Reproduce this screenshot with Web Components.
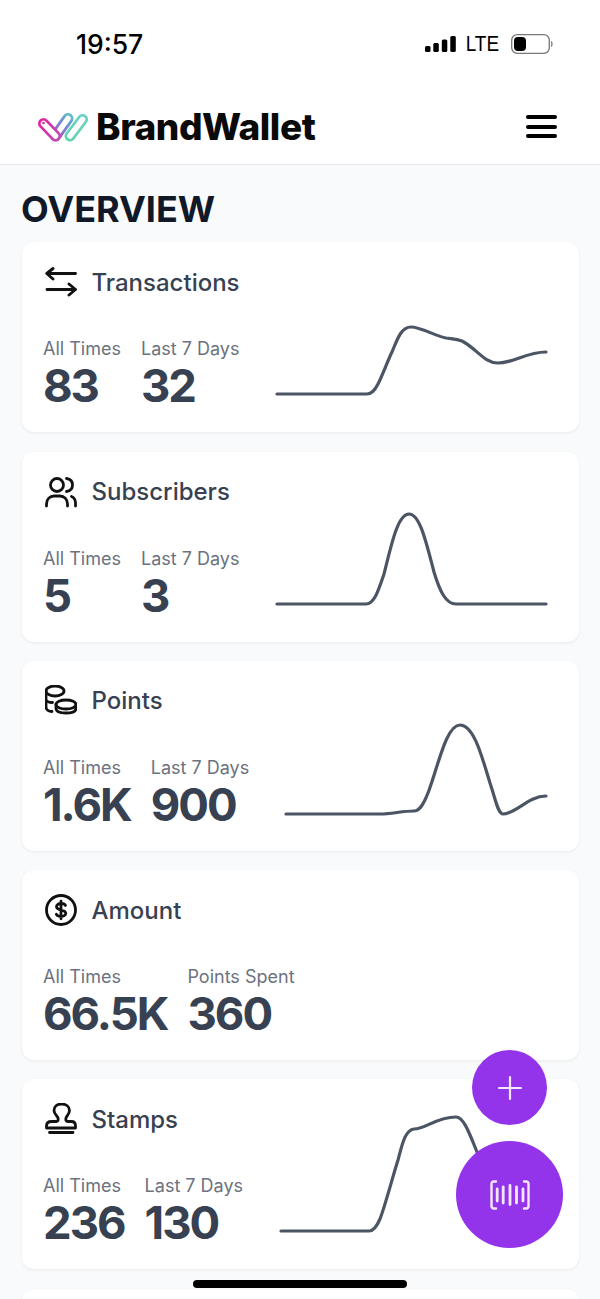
<!DOCTYPE html>
<html>
<head>
<meta charset="utf-8">
<title>BrandWallet</title>
<style>
    html, body { margin: 0; padding: 0; background: #f9fafb; }
    body { font-family: Inter, "Liberation Sans", sans-serif; }
</style>
</head>
<body>
<bw-app>
    <bw-status-bar slot="top" time="19:57" network="LTE"></bw-status-bar>
    <bw-header slot="top" brand="BrandWallet"></bw-header>

    <bw-overview heading="OVERVIEW">
        <bw-card heading="Transactions">
            <svg slot="icon" width="32" height="32" viewBox="0 0 32 32" fill="none" stroke="#111" stroke-width="2.9" stroke-linecap="round" stroke-linejoin="round"><path d="M30.500 7.500H2M8 2.500L1.800 7.500L8 13M2 23.500H30.500M24 18L30.500 23.500L24 29"/></svg>
            <bw-stat label="All Times" value="83"></bw-stat>
            <bw-stat label="Last 7 Days" value="32"></bw-stat>
            <bw-sparkline slot="chart" from="277" d="M277 152H367C372 152 375 148 378 142C383 132 388 118 392 110C397 98 401 85 411 85C420 85 436 94 446 96C452 97 456 97 462 99C476 106 484 121 498 121C514 121 526 110 546 110"></bw-sparkline>
        </bw-card>
        <bw-card heading="Subscribers">
            <svg slot="icon" width="32" height="32" viewBox="0 0 32 32" fill="none" stroke="#111" stroke-width="2.8" stroke-linecap="round" stroke-linejoin="round"><circle cx="12" cy="9" r="6.500"/><path d="M1.500 30V28C1.500 23 5 20 9 20H15C19 20 22.500 23 22.500 28V30M21.500 2.500C25 3 27.500 5.500 27.500 9C27.500 12.500 25 15 21.500 15.500M26.500 20.500C29 21.500 30.500 24 30.500 27V30"/></svg>
            <bw-stat label="All Times" value="5"></bw-stat>
            <bw-stat label="Last 7 Days" value="3"></bw-stat>
            <bw-sparkline slot="chart" from="277" d="M277 152H366C374 152 378 140 384 122C392 90 398 62 409 62C420 62 426 90 434 120C440 140 446 152 456 152H546"></bw-sparkline>
        </bw-card>
        <bw-card heading="Points">
            <svg slot="icon" width="32" height="32" viewBox="0 0 32 32" fill="none" stroke="#111" stroke-width="2.8" stroke-linecap="round" stroke-linejoin="round"><ellipse cx="10" cy="6" rx="9" ry="5"/><path d="M1 6V22C1 25 4 26.500 7 26.500M1.200 15C2 17 5 17.500 7.500 17.500"/><ellipse cx="21" cy="19.500" rx="10" ry="4.500"/><path d="M11 19.500V23.500C11 26.500 15.500 28 21 28C26.500 28 31 26.500 31 23.500V19.500"/></svg>
            <bw-stat label="All Times" value="1.6K"></bw-stat>
            <bw-stat label="Last 7 Days" value="900"></bw-stat>
            <bw-sparkline slot="chart" from="286" d="M286 153H380C392 153 402 150 414 150C420 150 424 142 428 132C438 106 446 64 460 64C474 64 482 96 490 122C496 140 498 153 503 153C516 153 528 135 546 135"></bw-sparkline>
        </bw-card>
        <bw-card heading="Amount">
            <svg slot="icon" width="32" height="32" viewBox="0 0 32 32" fill="none" stroke="#111" stroke-width="2.800" stroke-linecap="round" stroke-linejoin="round"><circle cx="16" cy="16" r="14.500"/><path d="M20.500 11.500C20 10 18 9.500 16 9.500C13.500 9.500 11.500 10.800 11.500 12.800C11.500 17 20.800 15 20.800 19.300C20.800 21.300 18.500 22.500 16 22.500C14 22.500 12 22 11.300 20.300M16 7.200V24.800"/></svg>
            <bw-stat label="All Times" value="66.5K"></bw-stat>
            <bw-stat label="Points Spent" value="360"></bw-stat>
        </bw-card>
        <bw-card heading="Stamps">
            <svg slot="icon" width="32" height="32" viewBox="0 0 32 32" fill="none" stroke="#111" stroke-width="2.800" stroke-linecap="round" stroke-linejoin="round"><path d="M1.500 25V23C1.500 20 3.500 18.500 6.500 18.500H11C13 18.500 13.500 17 13 15C12.400 13 9 11 9 7.500C9 3.500 12 1 16.500 1C21 1 24.500 3.500 24.500 7.500C24.500 11 21.500 13 21 15C20.500 17 21 18.500 23 18.500H26.500C29 18.500 30.500 20 30.500 23V25ZM4.500 29.500H28"/></svg>
            <bw-stat label="All Times" value="236"></bw-stat>
            <bw-stat label="Last 7 Days" value="130"></bw-stat>
            <bw-sparkline slot="chart" from="281" d="M281 152H369C374 152 377 147 380 140C386 124 392 100 398 81C402 66 405 51 414 50C426 50 436 38 456 38C464 38 470 56 477 73C484 90 500 120 546 130"></bw-sparkline>
        </bw-card>
        <bw-card></bw-card>
    </bw-overview>

    <bw-fab slot="overlay" size="75" right="53" bottom="174">
        <svg width="26" height="26" viewBox="0 0 26 26" fill="none" stroke="#f3e8ff" stroke-width="2.200" stroke-linecap="round"><path d="M13 2V24M2 13H24"/></svg>
    </bw-fab>
    <bw-fab slot="overlay" size="107" right="37" bottom="51">
        <svg width="40" height="30" viewBox="0 0 40 30" fill="none" stroke="#f3e8ff" stroke-width="2.400" stroke-linecap="round" stroke-linejoin="round"><path d="M6 1.500H4C2.500 1.500 1.500 2.500 1.500 4V26C1.500 27.500 2.500 28.500 4 28.500H6M34 1.500H36C37.500 1.500 38.500 2.500 38.500 4V26C38.500 27.500 37.500 28.500 36 28.500H34"/><path stroke-width="2.800" d="M7.200 9V21M13.200 7V23M20 5.500V24.500M26.500 7V23M33 9V21"/></svg>
    </bw-fab>
    <bw-home-indicator slot="overlay"></bw-home-indicator>
</bw-app>

<script>
class BwApp extends HTMLElement {
    constructor() {
        super();
        this.attachShadow({ mode: 'open' });
    }

    connectedCallback() {
        this.shadowRoot.innerHTML = `
            <style>
                :host {
                    display: flex;
                    flex-direction: column;
                    position: relative;
                    width: 600px;
                    height: 1299px;
                    overflow: hidden;
                    background: #f9fafb;
                }
            </style>
            <slot name="top"></slot>
            <slot></slot>
            <slot name="overlay"></slot>
        `;
    }
}

class BwStatusBar extends HTMLElement {
    constructor() {
        super();
        this.attachShadow({ mode: 'open' });
    }

    connectedCallback() {
        const time = this.getAttribute('time') || '';
        const network = this.getAttribute('network') || '';

        this.shadowRoot.innerHTML = `
            <style>
                :host {
                    display: flex;
                    flex: none;
                    align-items: center;
                    justify-content: space-between;
                    box-sizing: border-box;
                    height: 94px;
                    padding: 0 47px 7px 76px;
                    background: #fff;
                    color: #000;
                    font-family: Inter, "Liberation Sans", sans-serif;
                }
                .time { font-size: 26.500px; font-weight: 500; }
                .right { display: flex; align-items: center; gap: 11px; }
                .net {
                    font-family: "Liberation Sans", sans-serif;
                    font-size: 22px;
                    transform: scaleX(.86);
                    margin: 0 -2px 0 -4px;
                }
            </style>
            <span class="time">${time}</span>
            <span class="right">
                <svg width="31" height="16" viewBox="0 0 31 16" fill="#000"><rect x="0" y="10" width="5.500" height="6" rx="1.500"/><rect x="8.300" y="7" width="5.500" height="9" rx="1.500"/><rect x="16.800" y="3.500" width="5.500" height="12.500" rx="1.500"/><rect x="25.300" y="0" width="5.500" height="16" rx="1.500"/></svg>
                <span class="net">${network}</span>
                <svg width="42" height="20" viewBox="0 0 42 20" fill="none"><rect x=".7" y=".7" width="37.600" height="18.600" rx="5.500" stroke="#777" stroke-width="1.300"/><rect x="3" y="3" width="12" height="14" rx="4" fill="#000"/><path d="M40 7.500C41.300 8 41.300 12 40 12.500" stroke="#777" stroke-width="1.300"/></svg>
            </span>
        `;
    }
}

class BwHeader extends HTMLElement {
    constructor() {
        super();
        this.attachShadow({ mode: 'open' });
    }

    connectedCallback() {
        const brand = this.getAttribute('brand') || '';

        this.shadowRoot.innerHTML = `
            <style>
                :host {
                    display: flex;
                    flex: none;
                    align-items: center;
                    justify-content: space-between;
                    box-sizing: border-box;
                    height: 71px;
                    padding: 0 43px 5px 38px;
                    background: #fff;
                    border-bottom: 1px solid #e5e7eb;
                }
                .logo { display: flex; align-items: center; gap: 6px; }
                .brand {
                    font-family: Inter, "Liberation Sans", sans-serif;
                    font-size: 37px;
                    font-weight: 800;
                    letter-spacing: -.45px;
                    color: #0a0a0a;
                }
                .menu { display: flex; flex-direction: column; gap: 5.500px; }
                .menu i { display: block; width: 31px; height: 4px; border-radius: 2px; background: #000; }
            </style>
            <span class="logo">
                <svg width="52" height="36" viewBox="38 108 52 36" fill="none" stroke-linecap="round">
                    <defs>
                        <linearGradient id="mid" gradientUnits="userSpaceOnUse" x1="55" y1="137" x2="71" y2="112"><stop offset="0" stop-color="#a855c4"/><stop offset=".6" stop-color="#6f8fd0"/><stop offset="1" stop-color="#62c6c6"/></linearGradient>
                        <linearGradient id="pink" gradientUnits="userSpaceOnUse" x1="43" y1="122" x2="60" y2="138"><stop offset="0" stop-color="#e0279f"/><stop offset="1" stop-color="#c04cb5"/></linearGradient>
                        <linearGradient id="teal" gradientUnits="userSpaceOnUse" x1="69" y1="138" x2="85" y2="114"><stop offset="0" stop-color="#5fd6b0"/><stop offset="1" stop-color="#6cd0c4"/></linearGradient>
                    </defs>
                    <path d="M55.500 135L68 117.500" stroke="url(#mid)" stroke-width="11"/>
                    <path d="M55.500 135L68 117.500" stroke="#fff" stroke-width="5.500"/>
                    <path d="M43.500 122.500L55.500 135" stroke="url(#pink)" stroke-width="11"/>
                    <path d="M43.500 122.500L55.500 135" stroke="#fff" stroke-width="5.500"/>
                    <circle cx="43.500" cy="122" r="1.300" fill="#e0279f"/>
                    <path d="M70 135L82.500 118.500" stroke="url(#teal)" stroke-width="11"/>
                    <path d="M70 135L82.500 118.500" stroke="#fff" stroke-width="5.500"/>
                </svg>
                <span class="brand">${brand}</span>
            </span>
            <span class="menu"><i></i><i></i><i></i></span>
        `;
    }
}

class BwOverview extends HTMLElement {
    constructor() {
        super();
        this.attachShadow({ mode: 'open' });
    }

    connectedCallback() {
        const heading = this.getAttribute('heading') || '';

        this.shadowRoot.innerHTML = `
            <style>
                :host {
                    display: flex;
                    flex: none;
                    flex-direction: column;
                    gap: 19.250px;
                    padding: 0 21px 0 22px;
                }
                h1 {
                    height: 58px;
                    margin: 0 0 0 -1px;
                    line-height: 88px;
                    font-family: Inter, "Liberation Sans", sans-serif;
                    font-size: 36px;
                    font-weight: 700;
                    color: #111827;
                }
            </style>
            <h1>${heading}</h1>
            <slot></slot>
        `;
    }
}

class BwCard extends HTMLElement {
    constructor() {
        super();
        this.attachShadow({ mode: 'open' });
    }

    connectedCallback() {
        const heading = this.getAttribute('heading') || '';

        this.shadowRoot.innerHTML = `
            <style>
                :host {
                    display: flex;
                    flex-direction: column;
                    flex: none;
                    box-sizing: border-box;
                    height: 190px;
                    padding: 24px 32px 20px 21px;
                    background: #fff;
                    border-radius: 12px;
                    box-shadow: 0 1px 3px rgba(0, 0, 0, .07);
                    font-family: Inter, "Liberation Sans", sans-serif;
                }
                .head {
                    display: flex;
                    align-items: center;
                    gap: 14.500px;
                    height: 32px;
                    padding-left: 2px;
                    font-size: 24px;
                    font-weight: 500;
                    color: #374151;
                }
                .head ::slotted(svg) { display: block; flex: none; }
                .body {
                    display: flex;
                    align-items: flex-end;
                    justify-content: space-between;
                    flex: 1;
                }
                .stats { display: flex; gap: 20px; }
            </style>
            <div class="head"><slot name="icon"></slot><span>${heading}</span></div>
            <div class="body">
                <div class="stats"><slot></slot></div>
                <slot name="chart"></slot>
            </div>
        `;
    }
}

class BwStat extends HTMLElement {
    constructor() {
        super();
        this.attachShadow({ mode: 'open' });
    }

    connectedCallback() {
        const label = this.getAttribute('label') || '';
        const value = this.getAttribute('value') || '';

        this.shadowRoot.innerHTML = `
            <style>
                :host { display: flex; flex-direction: column; }
                .label { font-size: 18px; line-height: 25px; color: #6b7280; white-space: nowrap; }
                .value { margin: -1px 0 1px; font-size: 45.500px; line-height: 51px; font-weight: 700; letter-spacing: -2px; color: #374151; white-space: nowrap; }
            </style>
            <span class="label">${label}</span>
            <span class="value">${value}</span>
        `;
    }
}

class BwSparkline extends HTMLElement {
    constructor() {
        super();
        this.attachShadow({ mode: 'open' });
    }

    connectedCallback() {
        const from = Number(this.getAttribute('from')) || 0;
        const d = this.getAttribute('d') || '';
        const width = 547 - from;

        // path coordinates: x from the page, y from the card top
        this.shadowRoot.innerHTML = `
            <style>
                :host { display: block; flex: none; width: ${width}px; height: 100px; }
                svg { display: block; width: 100%; height: 100%; overflow: visible; }
            </style>
            <svg viewBox="${from} 70 ${width} 100" fill="none">
                <path d="${d}" stroke="#4b5563" stroke-width="3.200" stroke-linecap="round" stroke-linejoin="round"/>
            </svg>
        `;
    }
}

class BwFab extends HTMLElement {
    constructor() {
        super();
        this.attachShadow({ mode: 'open' });
    }

    connectedCallback() {
        const size = this.getAttribute('size') || '56';
        const right = this.getAttribute('right') || '0';
        const bottom = this.getAttribute('bottom') || '0';

        this.shadowRoot.innerHTML = `
            <style>
                :host {
                    display: flex;
                    align-items: center;
                    justify-content: center;
                    position: absolute;
                    right: ${right}px;
                    bottom: ${bottom}px;
                    width: ${size}px;
                    height: ${size}px;
                    border-radius: 50%;
                    background: #9333ea;
                }
            </style>
            <slot></slot>
        `;
    }
}

class BwHomeIndicator extends HTMLElement {
    constructor() {
        super();
        this.attachShadow({ mode: 'open' });
    }

    connectedCallback() {
        this.shadowRoot.innerHTML = `
            <style>
                :host {
                    display: block;
                    position: absolute;
                    left: 193px;
                    bottom: 11px;
                    width: 214px;
                    height: 8px;
                    border-radius: 4px;
                    background: #000;
                }
            </style>
        `;
    }
}

customElements.define('bw-app', BwApp);
customElements.define('bw-status-bar', BwStatusBar);
customElements.define('bw-header', BwHeader);
customElements.define('bw-overview', BwOverview);
customElements.define('bw-card', BwCard);
customElements.define('bw-stat', BwStat);
customElements.define('bw-sparkline', BwSparkline);
customElements.define('bw-fab', BwFab);
customElements.define('bw-home-indicator', BwHomeIndicator);
</script>
</body>
</html>
